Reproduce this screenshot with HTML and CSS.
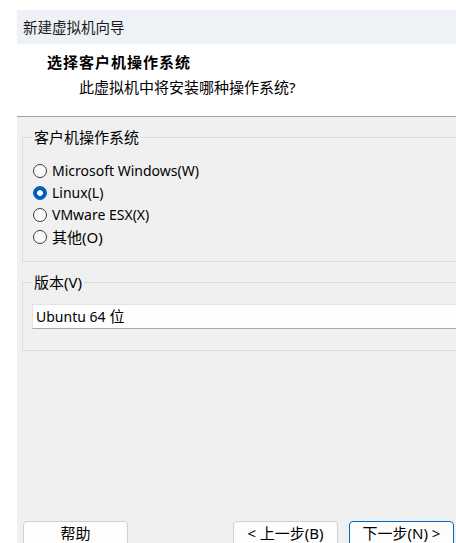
FILE: index.html
```html
<!DOCTYPE html>
<html lang="zh-CN">
<head>
<meta charset="utf-8">
<title>新建虚拟机向导</title>
<link rel="stylesheet" href="styles.css">
</head>
<body>
<div class="window">
  <div class="titlebar">新建虚拟机向导</div>
  <div class="header">
    <div class="header-title">选择客户机操作系统</div>
    <div class="header-sub">此虚拟机中将安装哪种操作系统?</div>
  </div>
  <div class="content">
    <fieldset class="group group-os">
      <legend class="legend">客户机操作系统</legend>
      <div class="radio-list">
        <div class="radio-row"><span class="radio"></span><span class="radio-label latin">Microsoft Windows(W)</span></div>
        <div class="radio-row"><span class="radio checked"></span><span class="radio-label latin">Linux(L)</span></div>
        <div class="radio-row"><span class="radio"></span><span class="radio-label latin">VMware ESX(X)</span></div>
        <div class="radio-row"><span class="radio"></span><span class="radio-label">其他(O)</span></div>
      </div>
    </fieldset>
    <fieldset class="group group-ver">
      <legend class="legend">版本(V)</legend>
      <div class="select"><span class="latin">Ubuntu 64</span>&nbsp;位</div>
    </fieldset>
  </div>
  <div class="footer">
    <div class="btn">帮助</div>
    <div class="spacer"></div>
    <div class="btn">&lt; 上一步(B)</div>
    <div class="btn primary">下一步(N) &gt;</div>
  </div>
</div>
</body>
</html>
```

FILE: styles.css
```css
html, body {
  margin: 0;
  padding: 0;
  background: #ffffff;
}
body {
  font-family: "Noto Sans", "Noto Sans CJK SC", sans-serif;
  font-size: 15px;
  color: #000;
  overflow: hidden;
}
.latin {
  font-size: 14px;
}
.window {
  margin: 10px 0 0 17px;
  width: 439px;
  height: 533px;
  background: #f0f0f0;
  display: flex;
  flex-direction: column;
  overflow: hidden;
}
.titlebar {
  height: 34px;
  background: #eef2f6;
  display: flex;
  align-items: center;
  padding-left: 6px;
  font-size: 14.5px;
  color: #1a1a1a;
  line-height: 1;
}
.header {
  height: 73px;
  background: #ffffff;
  border-bottom: 1px solid #a0a0a0;
  display: flex;
  flex-direction: column;
  box-sizing: border-box;
  padding-top: 8px;
}
.header-title {
  margin-left: 30px;
  font-weight: bold;
  letter-spacing: 1px;
  line-height: 20px;
}
.header-sub {
  margin-left: 62px;
  margin-top: 5px;
  line-height: 20px;
}
.content {
  display: flex;
  flex-direction: column;
  padding: 10px 0 0 5px;
  gap: 10px;
}
.group {
  margin: 0;
  width: 450px;
  box-sizing: border-box;
  border: 1px solid #dcdcdc;
  padding: 0 0 0 9px;
}
.legend {
  padding: 0 2px;
  margin-left: 0;
  line-height: 20px;
}
.group-os {
  padding-bottom: 13px;
}
.radio-list {
  display: flex;
  flex-direction: column;
  padding-top: 13px;
}
.radio-row {
  height: 22px;
  display: flex;
  align-items: center;
  gap: 5px;
  padding-left: 1px;
}
.radio {
  width: 14px;
  height: 14px;
  box-sizing: border-box;
  border: 1px solid #3a3a3a;
  border-radius: 50%;
  background: #fafafa;
  flex: none;
}
.radio.checked {
  border: 1px solid #005fb8;
  background: radial-gradient(circle, #ffffff 0 2.6px, #005fb8 3.2px);
}
.radio-label {
  line-height: 20px;
}
.group-ver {
  padding-top: 12px;
  padding-bottom: 21px;
}
.select {
  height: 25px;
  box-sizing: border-box;
  background: #fdfdfd;
  border: 1px solid #e3e3e3;
  border-bottom-color: #a8a8a8;
  display: flex;
  align-items: center;
  padding-left: 3px;
  line-height: 1;
}
.footer {
  margin-top: auto;
  display: flex;
  padding: 0 2px 0 6px;
  gap: 11px;
  height: 22px;
  overflow: visible;
}
.spacer {
  flex: 1;
}
.btn {
  width: 105px;
  height: 28px;
  box-sizing: border-box;
  border: 1px solid #d0d0d0;
  border-radius: 4px;
  background: #fdfdfd;
  text-align: center;
  line-height: 22px;
  flex: none;
}
.btn.primary {
  border-color: #0067c0;
}
```
